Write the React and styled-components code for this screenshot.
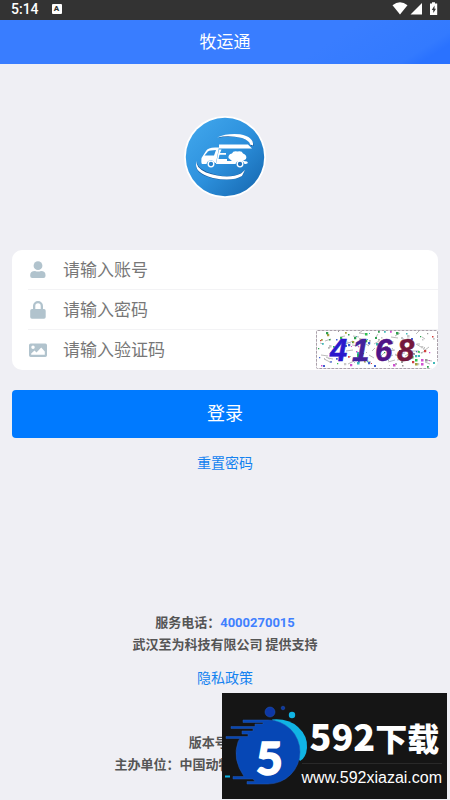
import styled, { createGlobalStyle } from 'styled-components';

const GlobalStyle = createGlobalStyle`
  * {
    box-sizing: border-box;
  }
  body {
    margin: 0;
    background: #efeff4;
    font-family: Roboto, 'Noto Sans CJK SC', sans-serif;
  }
  a {
    text-decoration: none;
  }
`;

//seeded noise so the captcha does not change on every render
const noiseColors = ['#c8c8c8', '#d050d0', '#30a050', '#d04040', '#b5b5b5', '#4060d0', '#a8a040', '#40b8b8', '#999', '#30c050'];
let seed = 4168;
const random = (max) => {
  seed = (seed * 16807) % 2147483647;
  return seed % max;
};
const dots = Array.from({ length: 130 }, () => ({
  x: 1 + random(118),
  y: 1 + random(36),
  size: 1 + random(7) / 4,
  color: noiseColors[random(noiseColors.length)],
}));
const scratches = Array.from({ length: 60 }, () => ({
  x: 4 + random(106),
  y: 3 + random(32),
  dx: 2 + random(6),
  dy: random(7) - 3,
}));

const StatusIcons = () => (
  <StyledStatusIcons viewBox='0 0 48 16' aria-hidden='true'>
    <path d='M0.5 4.2Q8 -1.5 15.5 4.2L8 13.5Z' fill='white' />
    <path d='M30 2V13.5H18.5Z' fill='white' />
    <path d='M40 1.2H43V2.5H45.2V14H38V2.5H40Z' fill='white' />
    <path d='M42.5 4.5L39.8 9H41.3V12L44 7.7H42.5Z' fill='#333' />
  </StyledStatusIcons>
);

const Logo = () => (
  <StyledLogo viewBox='0 0 82 82' role='img' aria-label='牧运通'>
    <defs>
      <linearGradient id='logo-blue' x1='0' y1='0' x2='1' y2='1'>
        <stop offset='0' stopColor='#43a9ee' />
        <stop offset='0.5' stopColor='#2d91dd' />
        <stop offset='1' stopColor='#1464ac' />
      </linearGradient>
    </defs>
    <circle cx='41' cy='41' r='41' fill='white' />
    <circle cx='41' cy='41' r='39.2' fill='url(#logo-blue)' />
    <path d='M33 22Q43 17.5 56 19Q70 21.5 69.5 30L67 30Q67 25 58 22Q45 19.5 33 22Z' fill='#14589b' />
    <path d='M33 21.5Q43 17 56 18.3Q70 21 69 29.5L66 28.5Q66 25 58 22Q45 19 33 21.5Z' fill='white' />
    <path d='M13 45.5Q12 51 23 56Q44 64 57 57L61 54.5L58.5 60Q48 66 29 62.5Q8 57 13 45.5Z' fill='#14589b' />
    <path d='M13 45Q11 51 22 56.5Q44 64 57 57.5L61 54L58 60Q48 66 29 62Q8 56 13 45Z' fill='white' />
    <path d='M35 28.5H64L68 32.5H35Z' fill='white' />
    <path d='M22 35Q24 31 33 31.5H35L32 47H31A4.5 4.5 0 0 0 22.5 48H18Q17 47 17.5 42Z' fill='white' />
    <path d='M24 35.5Q26 34 32 34L30 39.5H20.5Z' fill='#2d8fd9' />
    <path d='M35 33.5H37.5L36 37H42V38.7H35.5L34.5 43H43V45H60L63 45.5L64 47L62 48H60.5A4.7 4.7 0 0 0 51.5 48H32Z' fill='white' />
    <path d='M44.5 42Q44 38 48 37.5Q49 34.5 53.5 35.5Q58 34.5 59 37.5Q63.5 39 62 43L59 45H48Z' fill='white' />
    <circle cx='27' cy='48' r='2.8' fill='#2883cd' stroke='white' strokeWidth='1.3' />
    <circle cx='56' cy='48' r='2.8' fill='#2374bd' stroke='white' strokeWidth='1.3' />
  </StyledLogo>
);

const UserIcon = () => (
  <StyledFieldIcon viewBox='0 0 18 18' aria-hidden='true'>
    <circle cx='9' cy='4.7' r='4.4' />
    <path d='M1.2 15V14Q1.2 10 6 10Q9 11 12 10Q16.5 10 16.5 14V15Q16.5 17 14.5 17H3.2Q1.2 17 1.2 15Z' />
  </StyledFieldIcon>
);

const LockIcon = () => (
  <StyledFieldIcon viewBox='0 0 18 18' aria-hidden='true'>
    <path
      fillRule='evenodd'
      d='M4 8V5A5 5 0 0 1 14 5V8H15Q16.7 8 16.7 9.7V16Q16.7 17.7 15 17.7H3Q1.2 17.7 1.2 16V9.7Q1.2 8 3 8ZM6.3 8H11.7V5A2.7 2.7 0 0 0 6.3 5Z'
    />
  </StyledFieldIcon>
);

const ImageIcon = () => (
  <StyledFieldIcon viewBox='0 0 18 18' aria-hidden='true'>
    <path
      fillRule='evenodd'
      d='M1.7 2.5H16.3Q18 2.5 18 4.2V14.3Q18 16 16.3 16H1.7Q0 16 0 14.3V4.2Q0 2.5 1.7 2.5ZM4 4.5A1.7 1.7 0 1 0 4 8A1.7 1.7 0 1 0 4 4.5ZM2.2 13.7H15.8V10.5L12.2 6.5L7.5 11.5L5.5 9.5L2.2 12.5Z'
    />
  </StyledFieldIcon>
);

const Captcha = () => (
  <StyledCaptcha type='button' aria-label='验证码'>
    <svg viewBox='0 0 122 39'>
      <rect width='122' height='39' fill='white' />
      {scratches.map((s, i) => (
        <path key={i} d={`M${s.x} ${s.y}l${s.dx} ${s.dy}`} stroke='#bbb' />
      ))}
      {dots.map((d, i) => (
        <rect key={i} x={d.x} y={d.y} width={d.size} height={d.size} fill={d.color} />
      ))}
      <g
        fontFamily='Liberation Sans, sans-serif'
        fontWeight='700'
        fontStyle='italic'
        fontSize='31'
        strokeWidth='0.5'
      >
        <text x='14' y='31' fill='#2a18cc' stroke='#2a18cc'>4</text>
        <text x='36' y='31' fill='#44229c' stroke='#44229c'>1</text>
        <text x='59' y='31' fill='#501488' stroke='#501488'>6</text>
        <text x='81' y='31' fill='#74183c' stroke='#74183c'>8</text>
      </g>
      <rect x='0.5' y='0.5' width='121' height='38' rx='1' fill='none' stroke='#aaa0aa' strokeDasharray='3 1' />
    </svg>
  </StyledCaptcha>
);

const WatermarkLogo = () => (
  <StyledWatermarkLogo viewBox='0 0 86 106' aria-hidden='true'>
    <path d='M50 26.5Q66 25 76 34Q86 43 85 55Q84 65 78 68Z' fill='#10b4e4' />
    <g fill='#0647b5' stroke='#2459b4' strokeWidth='0.5'>
      <path d='M46 27A32 32 0 1 1 46 91H25V88.5H33L31 86H11V83.5H22Q10 66 16 49Q17 46.5 18 45.5H4V43.5H26V41H20V38H31V35.5H9V33.5H33V31H41V29.5H21V27Z' />
      <circle cx='48' cy='19' r='5' fill='#0d37a5' />
      <circle cx='61' cy='15' r='1.8' fill='#0d37a5' />
    </g>
    <path d='M3 82.5H8V84.5H3Z' fill='#10b4e4' />
    <circle cx='70' cy='22' r='3.2' fill='#10b4e4' />
    <text x='34' y='82' fill='white' stroke='white' strokeWidth='1.5' fontFamily='Lato, sans-serif' fontSize='46' fontWeight='900'>
      5
    </text>
  </StyledWatermarkLogo>
);

const App = () => {
  return (
    <StyledPage>
      <GlobalStyle />
      <StyledStatusBar>
        <StyledClock>
          5:14 <span>A</span>
        </StyledClock>
        <StatusIcons />
      </StyledStatusBar>
      <StyledHeader>
        <h1>牧运通</h1>
      </StyledHeader>
      <StyledMain>
        <Logo />
        <StyledForm onSubmit={(e) => e.preventDefault()}>
          <StyledFields>
            <StyledField>
              <UserIcon />
              <input type='text' name='account' aria-label='账号' placeholder='请输入账号' />
            </StyledField>
            <StyledField>
              <LockIcon />
              <input type='password' name='password' aria-label='密码' placeholder='请输入密码' />
            </StyledField>
            <StyledField>
              <ImageIcon />
              <input type='text' name='code' aria-label='验证码' placeholder='请输入验证码' />
              <Captcha />
            </StyledField>
          </StyledFields>
          <StyledSubmit type='submit'>登录</StyledSubmit>
        </StyledForm>
        <StyledLink href='#reset'>重置密码</StyledLink>
      </StyledMain>
      <StyledFooter>
        <p>
          服务电话：<a href='tel:4000270015'>4000270015</a>
        </p>
        <p>武汉至为科技有限公司 提供支持</p>
        <StyledLink href='#privacy'>隐私政策</StyledLink>
        <p>版本号:1.0.0</p>
        <p>主办单位：中国动物疫病预防控制中心</p>
      </StyledFooter>
      <StyledWatermark>
        <WatermarkLogo />
        <StyledWatermarkText>
          <strong>
            <em>592</em>下载
          </strong>
          <span>www.592xiazai.com</span>
        </StyledWatermarkText>
      </StyledWatermark>
    </StyledPage>
  );
};

export default App;

const StyledPage = styled.div`
  position: relative;
  min-height: 100vh;
  display: flex;
  flex-direction: column;
  overflow: hidden;
`;

const StyledStatusBar = styled.div`
  height: 20px;
  padding: 0 10px 2px 11px;
  display: flex;
  align-items: center;
  justify-content: space-between;
  background: #333;
  color: white;
`;

const StyledClock = styled.div`
  display: flex;
  align-items: center;
  gap: 13px;
  font-size: 14px;
  font-weight: 500;
  line-height: 16px;
  span {
    width: 10px;
    height: 10px;
    border-radius: 1px;
    background: white;
    color: #333;
    font-size: 8px;
    font-weight: 900;
    line-height: 10px;
    text-align: center;
  }
`;

const StyledStatusIcons = styled.svg`
  width: 48px;
  height: 16px;
`;

const StyledHeader = styled.header`
  height: 44px;
  display: flex;
  align-items: center;
  justify-content: center;
  background: linear-gradient(148deg, transparent 70%, #337aff 90%, #2a72ff 94%), #397dff;
  h1 {
    margin: 0;
    color: white;
    font-size: 17px;
    font-weight: 400;
    line-height: 24px;
  }
`;

const StyledMain = styled.main`
  flex: 1;
  padding: 52px 12px 0;
  display: flex;
  flex-direction: column;
  align-items: center;
`;

const StyledLogo = styled.svg`
  width: 82px;
  height: 82px;
`;

const StyledForm = styled.form`
  width: 100%;
  margin: 52px 0 15px;
`;

const StyledFields = styled.div`
  margin-bottom: 20px;
  border-radius: 10px;
  background: white;
  overflow: hidden;
`;

const StyledField = styled.div`
  height: 40px;
  margin-left: 16px;
  padding-left: 1px;
  display: flex;
  align-items: center;
  border-bottom: 1px solid #f3f3f5;
  &:last-child {
    border-color: white;
  }
  input {
    flex: 1;
    min-width: 0;
    margin-left: 16px;
    padding: 0;
    border: none;
    outline: none;
    background: transparent;
    font-family: inherit;
    font-size: 17px;
    line-height: 24px;
  }
  input::placeholder {
    color: #777;
  }
`;

const StyledFieldIcon = styled.svg`
  width: 18px;
  height: 18px;
  flex: none;
  fill: #b1c3cd;
`;

const StyledCaptcha = styled.button`
  padding: 0;
  border: none;
  border-bottom-right-radius: 10px;
  background: none;
  overflow: hidden;
  svg {
    display: block;
    width: 122px;
    height: 39px;
  }
`;

const StyledSubmit = styled.button`
  width: 100%;
  height: 48px;
  border: none;
  border-radius: 4px;
  background: #007aff;
  color: white;
  font-family: inherit;
  font-size: 18px;
  line-height: 24px;
`;

const StyledLink = styled.a`
  color: #1482f0;
  font-size: 14px;
  line-height: 20px;
`;

const StyledFooter = styled.footer`
  padding: 0 12px 24px;
  color: #555;
  font-size: 13px;
  font-weight: 700;
  line-height: 22px;
  text-align: center;
  p {
    margin: 0;
  }
  p a {
    color: #4080ff;
  }
  ${StyledLink} {
    display: inline-block;
    margin: 12px 0 44px;
    font-weight: 400;
  }
`;

const StyledWatermark = styled.aside`
  position: absolute;
  right: 3px;
  bottom: 1px;
  height: 106px;
  display: flex;
  padding-right: 5px;
  background: #151515;
  color: white;
`;

const StyledWatermarkLogo = styled.svg`
  width: 86px;
  height: 106px;
  margin-right: -6px;
`;

const StyledWatermarkText = styled.div`
  padding-top: 18px;
  display: flex;
  flex-direction: column;
  strong {
    padding-left: 8px;
    border-bottom: 1px solid #292929;
    font-family: 'Noto Sans CJK SC', sans-serif;
    font-size: 32px;
    font-weight: 900;
    line-height: 52px;
    white-space: nowrap;
  }
  em {
    font-size: 36px;
    font-style: normal;
    line-height: 48px;
  }
  span {
    font-family: 'Liberation Sans', sans-serif;
    font-size: 16px;
    line-height: 28px;
  }
`;
